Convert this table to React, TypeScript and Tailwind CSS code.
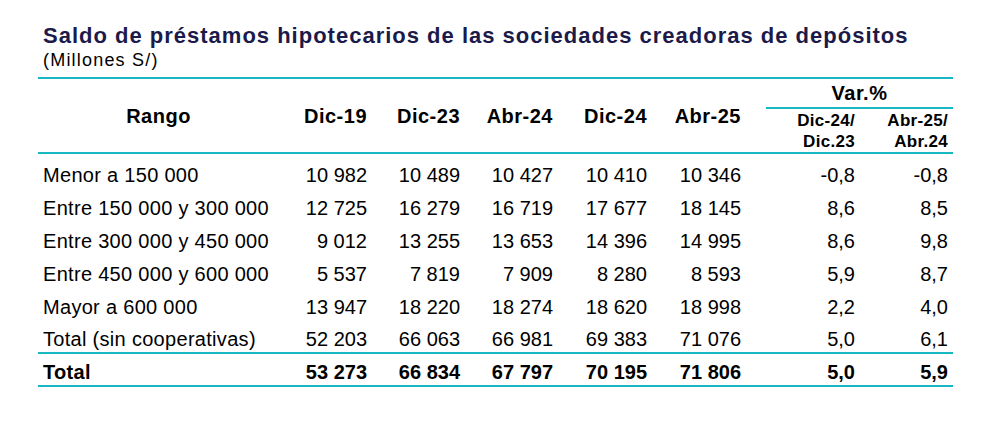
import React from "react";

const rows: [string, string[], string[]][] = [
  ["Menor a 150 000", ["10 982", "10 489", "10 427", "10 410", "10 346"], ["-0,8", "-0,8"]],
  ["Entre 150 000 y 300 000", ["12 725", "16 279", "16 719", "17 677", "18 145"], ["8,6", "8,5"]],
  ["Entre 300 000 y 450 000", ["9 012", "13 255", "13 653", "14 396", "14 995"], ["8,6", "9,8"]],
  ["Entre 450 000 y 600 000", ["5 537", "7 819", "7 909", "8 280", "8 593"], ["5,9", "8,7"]],
  ["Mayor a 600 000", ["13 947", "18 220", "18 274", "18 620", "18 998"], ["2,2", "4,0"]],
  ["Total (sin cooperativas)", ["52 203", "66 063", "66 981", "69 383", "71 076"], ["5,0", "6,1"]],
];

const numW = ["w-[93px]", "w-[93px]", "w-[93px]", "w-[94px]", "w-[94px]"];

function Row({ label, nums, vars, bold, className }: { label: string; nums: string[]; vars: string[]; bold?: boolean; className?: string }) {
  return (
    <div className={`flex h-[33px] items-center pt-[5px] text-[20px] leading-none text-black ${bold ? "font-bold" : ""} ${className ?? ""}`}>
      <div className="w-[241px] pl-[5px] whitespace-nowrap tracking-[0.3px]">{label}</div>
      {nums.map((n, i) => (
        <div key={i} className={`${numW[i]} pr-[5px] text-right whitespace-nowrap`}>{n}</div>
      ))}
      <div className="w-[20px]" />
      <div className="w-[94px] pr-[5px] text-right">{vars[0]}</div>
      <div className="w-[93px] pr-[5px] text-right">{vars[1]}</div>
    </div>
  );
}

export default function App() {
  const heads = ["Dic-19", "Dic-23", "Abr-24", "Dic-24", "Abr-25"];
  return (
    <div className="w-[1000px] h-[431px] bg-white" style={{ fontFamily: '"Liberation Sans", Arial, sans-serif' }}>
      <div className="pt-[23px] pl-[43px]">
        <div className="text-[22px] font-bold leading-[26px] tracking-[1px] text-[#1b1a4a] whitespace-nowrap">
          Saldo de préstamos hipotecarios de las sociedades creadoras de depósitos
        </div>
        <div className="text-[18px] leading-[22px] text-black tracking-[1.2px] whitespace-nowrap">(Millones S/)</div>
      </div>
      <div className="ml-[38px] mt-[6px] w-[915px] border-t-2 border-[#17b8c2]">
        <div className="flex h-[75px] font-bold text-black border-b-2 border-[#17b8c2]">
          <div className="w-[241px] flex items-center justify-center text-[20px] tracking-[0.5px]">Rango</div>
          {heads.map((h, i) => (
            <div key={h} className={`${numW[i]} pr-[5px] flex items-center justify-end text-[20px] tracking-[0.5px]`}>{h}</div>
          ))}
          <div className="w-[20px]" />
          <div className="w-[187px] flex flex-col">
            <div className="h-[30px] border-b-2 border-[#17b8c2] flex items-center justify-center text-[20px] tracking-[0.5px]">Var.%</div>
            <div className="flex flex-1 items-center text-[17px] leading-[21px] tracking-[0.3px]">
              <div className="w-[94px] pr-[5px] text-right">Dic-24/<br />Dic.23</div>
              <div className="w-[93px] pr-[5px] text-right">Abr-25/<br />Abr.24</div>
            </div>
          </div>
        </div>
        <div className="pt-[2px]">
          {rows.map(([l, n, v], i) => (
            <Row key={l} label={l} nums={n} vars={v} className={i === rows.length - 1 ? "border-b-2 border-[#17b8c2]" : ""} />
          ))}
        </div>
        <Row label="Total" nums={["53 273", "66 834", "67 797", "70 195", "71 806"]} vars={["5,0", "5,9"]} bold className="border-b-2 border-[#17b8c2]" />
      </div>
    </div>
  );
}
